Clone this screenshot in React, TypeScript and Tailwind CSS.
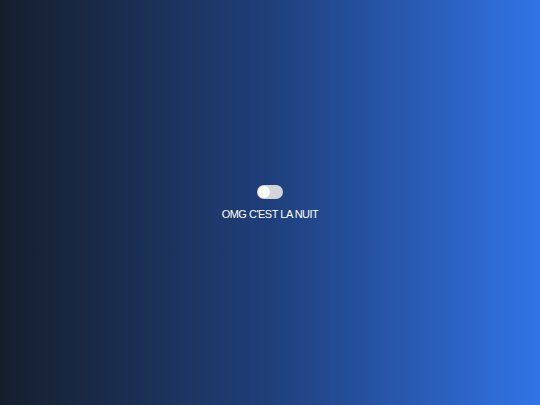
export default function App() {
    return (
        <div className="h-[405px] w-full bg-gradient-to-r from-[#151e2d] via-[#1f3f7b] to-[#3174e6] flex flex-col items-center justify-center" style={{ fontFamily: '"Liberation Sans", Arial, sans-serif' }}>
            {/* night mode switch */}
            <button className="w-[26px] h-[14px] rounded-full bg-[#d4d4d8] flex items-center px-[1px]">
                <span className="w-[12px] h-[12px] rounded-full bg-white block"></span>
            </button>
            <p className="mt-[9px] text-[11px] leading-[13px] tracking-[-0.5px] text-white">OMG C'EST LA NUIT</p>
        </div>
    )
}
